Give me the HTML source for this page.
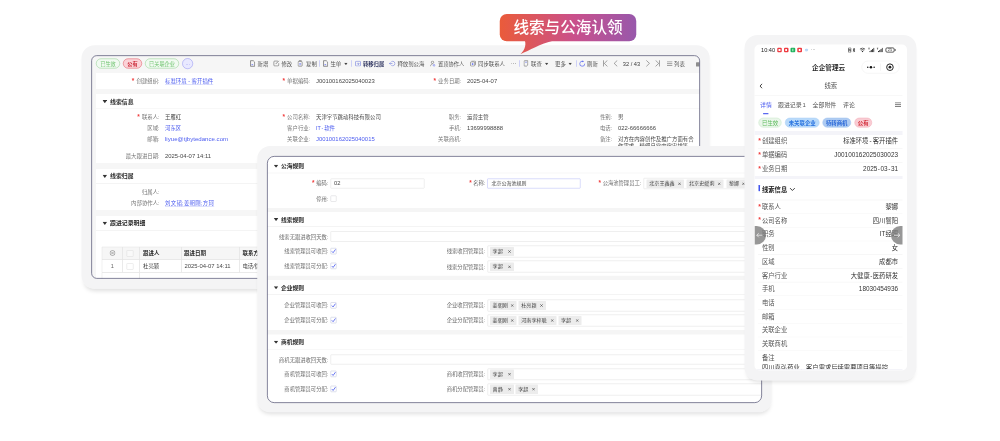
<!DOCTYPE html>
<html lang="zh-CN">
<head>
<meta charset="utf-8">
<title>线索与公海认领</title>
<style>
html,body{margin:0;padding:0;}
body{width:1000px;height:441px;position:relative;overflow:hidden;background:#fff;font-family:"Liberation Sans","Noto Sans CJK SC",sans-serif;}
#root{position:absolute;left:0;top:0;width:4000px;height:1764px;transform:scale(0.25);transform-origin:0 0;}
#wrap{position:absolute;left:0;top:0;width:1000px;height:441px;overflow:hidden;}
#z{position:relative;width:1000px;height:441px;zoom:4;}
.frame{position:absolute;background:#f4f4f5;border-radius:13px;box-shadow:0 4px 4px -2.5px rgba(0,0,0,0.13);}
.screen{position:absolute;overflow:hidden;}
.screen div,.screen span,.screen svg{position:absolute;}
.screen span{white-space:nowrap;mix-blend-mode:darken;}
.screen b{position:static;}
.edge{position:absolute;box-sizing:border-box;border:0.9px solid #5a5a78;pointer-events:none;}
#bubble{position:absolute;left:499.8px;top:14px;width:136.4px;height:27.2px;border-radius:7px;background:linear-gradient(90deg,#ea5b3a 0%,#c9508c 55%,#9858ab 100%);}
#bubble span{position:absolute;left:0;right:0;top:0;height:27.2px;line-height:26.6px;text-align:center;color:#fff;font-size:15.6px;font-weight:500;white-space:nowrap;mix-blend-mode:lighten;}
#tail{position:absolute;left:499.8px;top:14px;width:136.4px;height:42px;}
</style>
</head>
<body>
<div id="wrap"><div id="root"><div id="z">

<!-- left card -->
<div class="frame" style="left:81.5px;top:45.2px;width:628.2px;height:243.6px;"></div>
<div class="screen" style="left:91.2px;top:55.2px;width:608.80px;height:223.50px;background:#f6f6f6;border-radius:5.5px 5.5px 0 5.5px;">
<div style="left:4.80px;top:17.80px;width:604.00px;height:16.00px;background:#fff;"></div>
<div style="left:4.80px;top:38.80px;width:604.00px;height:69.00px;background:#fff;"></div>
<div style="left:4.80px;top:113.80px;width:604.00px;height:41.00px;background:#fff;"></div>
<div style="left:4.80px;top:160.80px;width:604.00px;height:62.70px;background:#fff;"></div>
<div style="left:4.80px;top:52.70px;width:604.00px;height:0.60px;background:#f0f0f0;"></div>
<div style="left:4.80px;top:127.90px;width:604.00px;height:0.60px;background:#f0f0f0;"></div>
<div style="left:4.80px;top:174.90px;width:604.00px;height:0.60px;background:#f0f0f0;"></div>
<div style="left:4.80px;top:3.40px;width:24.00px;height:10.00px;background:#f1faf1;border:0.50px solid #8fd18f;border-radius:5.00px;box-sizing:border-box;"></div>
<span style="left:16.80px;top:5.35px;font-size:5.20px;line-height:7.80px;color:#6cc26c;transform:translateX(-50%);">已生效</span>
<div style="left:31.80px;top:3.40px;width:19.00px;height:10.00px;background:#fbd3d8;border:0.50px solid #e0525f;border-radius:5.00px;box-sizing:border-box;"></div>
<span style="left:41.30px;top:5.35px;font-size:5.20px;line-height:7.80px;color:#c8202f;font-weight:700;transform:translateX(-50%);">公有</span>
<div style="left:53.80px;top:3.40px;width:34.00px;height:10.00px;background:#f1faf1;border:0.50px solid #8fd18f;border-radius:5.00px;box-sizing:border-box;"></div>
<span style="left:70.80px;top:5.35px;font-size:5.20px;line-height:7.80px;color:#6cc26c;transform:translateX(-50%);">已关联企业</span>
<div style="left:91.10px;top:3.05px;width:10.70px;height:10.70px;background:#e9e9ff;border:0.50px solid #8f8ff2;border-radius:5.35px;box-sizing:border-box;"></div>
<span style="left:96.45px;top:6.12px;font-size:4.50px;line-height:6.75px;color:#7b7bea;transform:translateX(-50%);">···</span>
<svg style="left:158.80px;top:4.80px;width:5.20px;height:7.00px;" viewBox="0 0 9.6 12.4"><path d="M1 1h5l2.6 2.6v7.8h-7.6z" fill="none" stroke="#555" stroke-width="1.15"/><path d="M2.8 8.4h3" stroke="#4c5cf0" stroke-width="1.4"/></svg>
<span style="left:166.40px;top:5.13px;font-size:5.40px;line-height:8.10px;color:#555;">新增</span>
<svg style="left:181.80px;top:4.80px;width:6.80px;height:6.80px;" viewBox="0 0 12.8 12.8"><path d="M9 2H3.2a1.6 1.6 0 0 0-1.6 1.6v6a1.6 1.6 0 0 0 1.6 1.6h6a1.6 1.6 0 0 0 1.6-1.6V6" fill="none" stroke="#555" stroke-width="1"/><path d="M5 7.6l6-6" stroke="#555" stroke-width="1.2"/></svg>
<span style="left:190.20px;top:5.13px;font-size:5.40px;line-height:8.10px;color:#555;">修改</span>
<svg style="left:206.40px;top:4.90px;width:5.40px;height:6.80px;" viewBox="0 0 10 12.4"><rect x="1" y="2.6" width="7.6" height="8.8" rx="1.2" fill="none" stroke="#555" stroke-width="1"/><path d="M2.6 1h5" stroke="#555" stroke-width="1"/><path d="M3.2 6.4h3.4M3.2 8.6h3.4" stroke="#4c5cf0" stroke-width="0.9"/></svg>
<span style="left:214.80px;top:5.13px;font-size:5.40px;line-height:8.10px;color:#555;">复制</span>
<div style="left:227.90px;top:5.00px;width:0.60px;height:6.60px;background:#bfc3f6;"></div>
<svg style="left:231.80px;top:4.80px;width:5.20px;height:7.00px;" viewBox="0 0 9.6 12.4"><path d="M1 1h5l2.6 2.6v7.8h-7.6z" fill="none" stroke="#555" stroke-width="1.15"/><path d="M2.8 8.4h3" stroke="#4c5cf0" stroke-width="1.4"/></svg>
<span style="left:239.20px;top:5.13px;font-size:5.40px;line-height:8.10px;color:#555;">生单</span>
<svg style="left:252.70px;top:7.50px;width:3.80px;height:2.40px;" viewBox="0 0 6 4"><path d="M0 0h6L3 4z" fill="#444"/></svg>
<div style="left:259.90px;top:5.00px;width:0.60px;height:6.60px;background:#bfc3f6;"></div>
<svg style="left:263.80px;top:5.40px;width:6.00px;height:6.00px;" viewBox="0 0 12 12"><rect x="1" y="1.6" width="10" height="9.4" rx="1.4" fill="none" stroke="#5a68d8" stroke-width="1"/><path d="M3.6 6.6h4.6M6.4 4.4l2 2.2-2 2.2" fill="none" stroke="#5a68d8" stroke-width="1"/></svg>
<span style="left:271.80px;top:5.24px;font-size:5.30px;line-height:7.95px;color:#2f3560;font-weight:700;">转移归属</span>
<svg style="left:297.80px;top:5.40px;width:6.40px;height:6.00px;" viewBox="0 0 12.8 12"><path d="M4.6 2.4a4.6 4.6 0 1 1 0 7.4" fill="none" stroke="#5a68d8" stroke-width="1"/><path d="M0.6 6h6.4M3 3.8L0.8 6 3 8.2" fill="none" stroke="#5a68d8" stroke-width="1"/></svg>
<span style="left:306.20px;top:5.13px;font-size:5.40px;line-height:8.10px;color:#555;">释放到公海</span>
<svg style="left:338.80px;top:5.20px;width:5.60px;height:6.40px;" viewBox="0 0 11.2 12.8"><circle cx="5" cy="3.6" r="2.4" fill="none" stroke="#555" stroke-width="1"/><path d="M1 11.6c0-3 1.8-4.6 4-4.6" fill="none" stroke="#555" stroke-width="1"/><circle cx="8.2" cy="9.8" r="1.8" fill="none" stroke="#4c5cf0" stroke-width="1"/></svg>
<span style="left:346.80px;top:5.29px;font-size:5.25px;line-height:7.88px;color:#555;">置顶协作人</span>
<svg style="left:378.80px;top:5.30px;width:6.00px;height:6.20px;" viewBox="0 0 12 12.4"><rect x="1" y="2.8" width="8.4" height="8.4" rx="1.4" fill="none" stroke="#555" stroke-width="1"/><path d="M3 1h6.6a1.4 1.4 0 0 1 1.4 1.4v6.4" fill="none" stroke="#555" stroke-width="1"/><circle cx="5.2" cy="7" r="1.7" fill="#4c5cf0"/></svg>
<span style="left:386.80px;top:5.13px;font-size:5.40px;line-height:8.10px;color:#555;">同步联系人</span>
<div style="left:420.00px;top:8.30px;width:5.00px;height:0.60px;background:repeating-linear-gradient(90deg,#777 0 1.2px,transparent 1.2px 1.9px);"></div>
<div style="left:427.90px;top:5.00px;width:0.60px;height:6.60px;background:#bfc3f6;"></div>
<svg style="left:432.40px;top:4.90px;width:5.00px;height:6.80px;" viewBox="0 0 9.6 12.4"><path d="M1 2.4a1.4 1.4 0 0 1 1.4-1.4h5.8v8.4l-2.4 2H2.4A1.4 1.4 0 0 1 1 10z" fill="none" stroke="#555" stroke-width="1"/><path d="M3 4h3.6" stroke="#4c5cf0" stroke-width="1"/></svg>
<span style="left:439.80px;top:5.13px;font-size:5.40px;line-height:8.10px;color:#555;">联查</span>
<svg style="left:453.50px;top:7.50px;width:3.80px;height:2.40px;" viewBox="0 0 6 4"><path d="M0 0h6L3 4z" fill="#444"/></svg>
<span style="left:463.80px;top:5.13px;font-size:5.40px;line-height:8.10px;color:#555;">更多</span>
<svg style="left:477.10px;top:7.50px;width:3.80px;height:2.40px;" viewBox="0 0 6 4"><path d="M0 0h6L3 4z" fill="#444"/></svg>
<div style="left:485.10px;top:5.00px;width:0.60px;height:6.60px;background:#bfc3f6;"></div>
<svg style="left:487.60px;top:5.00px;width:7.00px;height:6.80px;" viewBox="0 0 14 13.6"><path d="M8.6 2.3A5 5 0 1 0 12 6.8" fill="none" stroke="#4c5cf0" stroke-width="1.3"/><path d="M7.4 0.2l3 2.2-3.2 1.8z" fill="#4c5cf0"/></svg>
<span style="left:495.80px;top:5.13px;font-size:5.40px;line-height:8.10px;color:#555;">刷新</span>
<svg style="left:511.80px;top:4.90px;width:5.00px;height:6.80px;" viewBox="0 0 10 13.6"><path d="M1 0.6v12.4M8.8 0.8L2.6 6.8l6.2 6" fill="none" stroke="#5c5c5c" stroke-width="1.1"/></svg>
<svg style="left:522.20px;top:4.90px;width:4.40px;height:6.80px;" viewBox="0 0 8.8 13.6"><path d="M7.6 0.8L1.4 6.8l6.2 6" fill="none" stroke="#5c5c5c" stroke-width="1.1"/></svg>
<span style="left:540.30px;top:4.80px;font-size:5.70px;line-height:8.55px;color:#3a3a3a;transform:translateX(-50%);">32 / 43</span>
<svg style="left:554.60px;top:4.90px;width:4.40px;height:6.80px;" viewBox="0 0 8.8 13.6"><path d="M1.2 0.8l6.2 6-6.2 6" fill="none" stroke="#5c5c5c" stroke-width="1.1"/></svg>
<svg style="left:563.80px;top:4.90px;width:5.00px;height:6.80px;" viewBox="0 0 10 13.6"><path d="M9 0.6v12.4M1.2 0.8l6.2 6-6.2 6" fill="none" stroke="#5c5c5c" stroke-width="1.1"/></svg>
<svg style="left:575.80px;top:6.00px;width:5.60px;height:4.80px;" viewBox="0 0 11.2 9.6"><path d="M0 1h11.2M0 4.8h11.2M0 8.6h11.2" stroke="#555" stroke-width="1.1"/></svg>
<span style="left:582.80px;top:5.13px;font-size:5.40px;line-height:8.10px;color:#555;">列表</span>
<div style="left:604.80px;top:7.00px;width:3.40px;height:4.40px;background:#8e8e8e;border-radius:0.6px;"></div>
<span style="left:68.40px;top:22.13px;font-size:5.40px;line-height:8.10px;color:#777;transform:translateX(-100%);"><b style="color:#f03a3a;font-weight:700;font-size:1.2em;line-height:0;margin-right:2.2px;position:relative;top:0.1px">*</b>创建组织:</span>
<span style="left:73.80px;top:22.13px;font-size:5.40px;line-height:8.10px;color:#4c5cf0;text-decoration:underline;text-decoration-thickness:0.35px;text-underline-offset:1.3px;text-decoration-color:rgba(76,92,240,0.75);">标准环<i style="font-style:normal;letter-spacing:1.6px">境-</i>客开插件</span>
<span style="left:219.00px;top:22.13px;font-size:5.40px;line-height:8.10px;color:#777;transform:translateX(-100%);"><b style="color:#f03a3a;font-weight:700;font-size:1.2em;line-height:0;margin-right:2.2px;position:relative;top:0.1px">*</b>单据编码:</span>
<span style="left:224.80px;top:21.58px;font-size:5.90px;line-height:8.85px;color:#474747;">J00100162025040023</span>
<span style="left:370.00px;top:22.13px;font-size:5.40px;line-height:8.10px;color:#777;transform:translateX(-100%);"><b style="color:#f03a3a;font-weight:700;font-size:1.2em;line-height:0;margin-right:2.2px;position:relative;top:0.1px">*</b>业务日期:</span>
<span style="left:375.80px;top:21.58px;font-size:5.90px;line-height:8.85px;color:#474747;">2025-04-07</span>
<svg style="left:11.20px;top:44.80px;width:4.60px;height:3.20px;" viewBox="0 0 8 4.6" preserveAspectRatio="none"><path d="M0 0h8L4 4.6z" fill="#333"/></svg>
<span style="left:18.80px;top:42.58px;font-size:5.90px;line-height:8.85px;color:#2a2a2a;font-weight:700;">线索信息</span>
<span style="left:68.40px;top:58.13px;font-size:5.40px;line-height:8.10px;color:#777;transform:translateX(-100%);"><b style="color:#f03a3a;font-weight:700;font-size:1.2em;line-height:0;margin-right:2.2px;position:relative;top:0.1px">*</b>联系人:</span>
<span style="left:73.80px;top:58.13px;font-size:5.40px;line-height:8.10px;color:#474747;">王雁红</span>
<span style="left:219.00px;top:58.13px;font-size:5.40px;line-height:8.10px;color:#777;transform:translateX(-100%);"><b style="color:#f03a3a;font-weight:700;font-size:1.2em;line-height:0;margin-right:2.2px;position:relative;top:0.1px">*</b>公司名称:</span>
<span style="left:224.80px;top:58.13px;font-size:5.40px;line-height:8.10px;color:#474747;">天津字节跳动科技有限公司</span>
<span style="left:370.00px;top:58.13px;font-size:5.40px;line-height:8.10px;color:#777;transform:translateX(-100%);">职务:</span>
<span style="left:375.80px;top:58.13px;font-size:5.40px;line-height:8.10px;color:#474747;">运营主管</span>
<span style="left:521.00px;top:58.13px;font-size:5.40px;line-height:8.10px;color:#777;transform:translateX(-100%);">性别:</span>
<span style="left:526.80px;top:58.13px;font-size:5.40px;line-height:8.10px;color:#474747;">男</span>
<span style="left:68.40px;top:69.13px;font-size:5.40px;line-height:8.10px;color:#777;transform:translateX(-100%);">区域:</span>
<span style="left:73.80px;top:69.13px;font-size:5.40px;line-height:8.10px;color:#4c5cf0;">河东区</span>
<span style="left:219.00px;top:69.13px;font-size:5.40px;line-height:8.10px;color:#777;transform:translateX(-100%);">客户行业:</span>
<span style="left:224.80px;top:69.13px;font-size:5.40px;line-height:8.10px;color:#4c5cf0;">IT<i style="font-style:normal;margin:0 0.8px">-</i>软件</span>
<span style="left:370.00px;top:69.13px;font-size:5.40px;line-height:8.10px;color:#777;transform:translateX(-100%);">手机:</span>
<span style="left:375.80px;top:68.58px;font-size:5.90px;line-height:8.85px;color:#474747;">13699998888</span>
<span style="left:521.00px;top:69.13px;font-size:5.40px;line-height:8.10px;color:#777;transform:translateX(-100%);">电话:</span>
<span style="left:526.80px;top:68.58px;font-size:5.90px;line-height:8.85px;color:#474747;">022-66666666</span>
<span style="left:68.40px;top:80.13px;font-size:5.40px;line-height:8.10px;color:#777;transform:translateX(-100%);">邮箱:</span>
<span style="left:73.80px;top:79.36px;font-size:6.10px;line-height:9.15px;color:#4c5cf0;">liyue@tjbytedance.com</span>
<span style="left:219.00px;top:80.13px;font-size:5.40px;line-height:8.10px;color:#777;transform:translateX(-100%);">关联企业:</span>
<span style="left:224.80px;top:79.58px;font-size:5.90px;line-height:8.85px;color:#4c5cf0;">J00100162025040015</span>
<span style="left:370.00px;top:80.13px;font-size:5.40px;line-height:8.10px;color:#777;transform:translateX(-100%);">关联商机:</span>
<span style="left:521.00px;top:80.13px;font-size:5.40px;line-height:8.10px;color:#777;transform:translateX(-100%);">备注:</span>
<span style="left:526.80px;top:80.13px;font-size:5.40px;line-height:8.10px;color:#474747;">对方在内容创作及推广方面有合</span>
<span style="left:526.80px;top:87.13px;font-size:5.40px;line-height:8.10px;color:#474747;">作需求，精细日常内容安排等</span>
<span style="left:68.40px;top:97.13px;font-size:5.40px;line-height:8.10px;color:#777;transform:translateX(-100%);">最大跟进日期:</span>
<span style="left:73.80px;top:96.58px;font-size:5.90px;line-height:8.85px;color:#474747;">2025-04-07 14:11</span>
<svg style="left:11.20px;top:119.60px;width:4.60px;height:3.20px;" viewBox="0 0 8 4.6" preserveAspectRatio="none"><path d="M0 0h8L4 4.6z" fill="#333"/></svg>
<span style="left:18.80px;top:116.58px;font-size:5.90px;line-height:8.85px;color:#2a2a2a;font-weight:700;">线索归属</span>
<span style="left:68.40px;top:133.13px;font-size:5.40px;line-height:8.10px;color:#777;transform:translateX(-100%);">归属人:</span>
<span style="left:68.40px;top:144.13px;font-size:5.40px;line-height:8.10px;color:#777;transform:translateX(-100%);">内部协作人:</span>
<span style="left:73.80px;top:144.13px;font-size:5.40px;line-height:8.10px;color:#4c5cf0;letter-spacing:0.3px;text-decoration:underline;text-decoration-thickness:0.35px;text-underline-offset:1.3px;text-decoration-color:rgba(76,92,240,0.75);">刘文韬;姜朝刚;方珂</span>
<svg style="left:11.20px;top:166.60px;width:4.60px;height:3.20px;" viewBox="0 0 8 4.6" preserveAspectRatio="none"><path d="M0 0h8L4 4.6z" fill="#333"/></svg>
<span style="left:18.80px;top:163.58px;font-size:5.90px;line-height:8.85px;color:#2a2a2a;font-weight:700;">跟进记录明细</span>
<div style="left:10.80px;top:191.80px;width:198.00px;height:12.40px;background:#f6f6f6;"></div>
<div style="left:10.80px;top:191.50px;width:198.00px;height:0.60px;background:#e3e3e3;"></div>
<div style="left:10.80px;top:203.90px;width:198.00px;height:0.60px;background:#e3e3e3;"></div>
<div style="left:10.80px;top:216.90px;width:198.00px;height:0.60px;background:#e3e3e3;"></div>
<div style="left:10.50px;top:191.80px;width:0.60px;height:25.40px;background:#e3e3e3;"></div>
<div style="left:30.90px;top:191.80px;width:0.60px;height:25.40px;background:#e3e3e3;"></div>
<div style="left:47.90px;top:191.80px;width:0.60px;height:25.40px;background:#e3e3e3;"></div>
<div style="left:89.90px;top:191.80px;width:0.60px;height:25.40px;background:#e3e3e3;"></div>
<div style="left:147.90px;top:191.80px;width:0.60px;height:25.40px;background:#e3e3e3;"></div>
<div style="left:10.50px;top:217.20px;width:0.60px;height:6.30px;background:#e3e3e3;"></div>
<div style="left:47.90px;top:217.20px;width:0.60px;height:6.30px;background:#e3e3e3;"></div>
<svg style="left:18.40px;top:194.80px;width:6.00px;height:6.00px;" viewBox="0 0 12 12"><circle cx="6" cy="6" r="5" fill="none" stroke="#666" stroke-width="1"/><path d="M3.6 4.8h4.8M3.6 7.2h4.8" stroke="#666" stroke-width="0.9"/></svg>
<div style="left:35.40px;top:195.00px;width:7.00px;height:6.60px;border:0.5px solid #dcdcdc;border-radius:0.8px;box-sizing:border-box;background:#f9f9f9;"></div>
<span style="left:51.80px;top:194.02px;font-size:5.50px;line-height:8.25px;color:#2a2a2a;font-weight:700;">跟进人</span>
<span style="left:92.80px;top:194.02px;font-size:5.50px;line-height:8.25px;color:#2a2a2a;font-weight:700;">跟进日期</span>
<span style="left:151.20px;top:194.02px;font-size:5.50px;line-height:8.25px;color:#2a2a2a;font-weight:700;">联系方式</span>
<span style="left:21.00px;top:206.91px;font-size:5.60px;line-height:8.40px;color:#666;transform:translateX(-50%);">1</span>
<div style="left:35.40px;top:208.00px;width:7.00px;height:6.60px;border:0.5px solid #dcdcdc;border-radius:0.8px;box-sizing:border-box;background:#fff;"></div>
<span style="left:51.80px;top:207.13px;font-size:5.40px;line-height:8.10px;color:#474747;">杜亮颖</span>
<span style="left:93.20px;top:206.58px;font-size:5.90px;line-height:8.85px;color:#474747;">2025-04-07 14:11</span>
<span style="left:151.20px;top:207.13px;font-size:5.40px;line-height:8.10px;color:#474747;">电话/微信</span>
</div>
<div class="edge" style="left:91.2px;top:55.2px;width:608.80px;height:223.50px;border-radius:5.5px 5.5px 0 5.5px;"></div>

<!-- title bubble -->
<svg id="tail" viewBox="0 0 136.4 42">
<defs><linearGradient id="g1" gradientUnits="userSpaceOnUse" x1="0" y1="0" x2="136.4" y2="0"><stop offset="0" stop-color="#ea5b3a"/><stop offset="0.55" stop-color="#c9508c"/><stop offset="1" stop-color="#9858ab"/></linearGradient></defs>
<path d="M25 26 C27 32 24 37 20.6 40.2 C30 36.5 40 30 54 26.6 Z" fill="url(#g1)"/>
</svg>
<div id="bubble"><span>线索与公海认领</span></div>

<!-- middle card -->
<div class="frame" style="left:257.3px;top:146px;width:514.4px;height:266.2px;"></div>
<div class="screen" style="left:267px;top:156px;width:495.00px;height:247.00px;background:#f5f5f5;border-radius:7.2px;">
<div style="left:0.00px;top:0.00px;width:495.00px;height:52.00px;background:#fff;"></div>
<svg style="left:6.70px;top:8.70px;width:4.60px;height:3.10px;" viewBox="0 0 8 4.6" preserveAspectRatio="none"><path d="M0 0h8L4 4.6z" fill="#333"/></svg>
<span style="left:14.00px;top:5.95px;font-size:5.75px;line-height:8.62px;color:#2a2a2a;font-weight:700;">公海规则</span>
<div style="left:0.00px;top:16.70px;width:495.00px;height:0.60px;background:#f0f0f0;"></div>
<div style="left:0.00px;top:56.00px;width:495.00px;height:63.80px;background:#fff;"></div>
<svg style="left:6.70px;top:61.90px;width:4.60px;height:3.10px;" viewBox="0 0 8 4.6" preserveAspectRatio="none"><path d="M0 0h8L4 4.6z" fill="#333"/></svg>
<span style="left:14.00px;top:59.95px;font-size:5.75px;line-height:8.62px;color:#2a2a2a;font-weight:700;">线索规则</span>
<div style="left:0.00px;top:70.10px;width:495.00px;height:0.60px;background:#f0f0f0;"></div>
<div style="left:0.00px;top:124.00px;width:495.00px;height:50.00px;background:#fff;"></div>
<svg style="left:6.70px;top:130.30px;width:4.60px;height:3.10px;" viewBox="0 0 8 4.6" preserveAspectRatio="none"><path d="M0 0h8L4 4.6z" fill="#333"/></svg>
<span style="left:14.00px;top:127.95px;font-size:5.75px;line-height:8.62px;color:#2a2a2a;font-weight:700;">企业规则</span>
<div style="left:0.00px;top:138.30px;width:495.00px;height:0.60px;background:#f0f0f0;"></div>
<div style="left:0.00px;top:178.40px;width:495.00px;height:68.60px;background:#fff;"></div>
<svg style="left:6.70px;top:184.70px;width:4.60px;height:3.10px;" viewBox="0 0 8 4.6" preserveAspectRatio="none"><path d="M0 0h8L4 4.6z" fill="#333"/></svg>
<span style="left:14.00px;top:181.95px;font-size:5.75px;line-height:8.62px;color:#2a2a2a;font-weight:700;">商机规则</span>
<div style="left:0.00px;top:193.20px;width:495.00px;height:0.60px;background:#f0f0f0;"></div>
<span style="left:61.20px;top:23.44px;font-size:5.30px;line-height:7.95px;color:#6e6e6e;transform:translateX(-100%);"><b style="color:#f03a3a;font-weight:700;font-size:1.2em;line-height:0;margin-right:1.6px;position:relative;top:0.1px">*</b>编码:</span>
<div style="left:63.40px;top:22.40px;width:94.20px;height:10.10px;border:0.6px solid #dedede;border-radius:0.8px;box-sizing:border-box;background:#fff;"></div>
<span style="left:67.00px;top:22.89px;font-size:5.80px;line-height:8.70px;color:#474747;">02</span>
<span style="left:218.30px;top:23.44px;font-size:5.30px;line-height:7.95px;color:#6e6e6e;transform:translateX(-100%);"><b style="color:#f03a3a;font-weight:700;font-size:1.2em;line-height:0;margin-right:1.6px;position:relative;top:0.1px">*</b>名称:</span>
<div style="left:220.20px;top:22.40px;width:93.40px;height:10.10px;border:0.6px solid #b4b8f6;border-radius:0.8px;box-sizing:border-box;background:#fff;"></div>
<span style="left:224.40px;top:23.77px;font-size:5.00px;line-height:7.50px;color:#474747;">北京公海池规则</span>
<span style="left:374.20px;top:23.44px;font-size:5.30px;line-height:7.95px;color:#6e6e6e;transform:translateX(-100%);"><b style="color:#f03a3a;font-weight:700;font-size:1.2em;line-height:0;margin-right:1.6px;position:relative;top:0.1px">*</b>公海池管理员工:</span>
<div style="left:376.60px;top:22.00px;width:122.40px;height:11.00px;border:0.6px solid #dedede;border-radius:0.8px;box-sizing:border-box;background:#fff;"></div>
<div style="left:379.60px;top:23.40px;width:37.40px;height:8.60px;background:#ececec;border-radius:0.6px;"></div>
<span style="left:382.20px;top:23.66px;font-size:5.10px;line-height:7.65px;color:#444;">北京王鑫鑫</span>
<svg style="left:411.10px;top:26.20px;width:3.00px;height:3.00px;" viewBox="0 0 6 6"><path d="M0.5 0.5l5 5M5.5 0.5l-5 5" stroke="#333" stroke-width="1.1"/></svg>
<div style="left:419.40px;top:23.40px;width:37.20px;height:8.60px;background:#ececec;border-radius:0.6px;"></div>
<span style="left:422.00px;top:23.66px;font-size:5.10px;line-height:7.65px;color:#444;">北京史媛莉</span>
<svg style="left:450.70px;top:26.20px;width:3.00px;height:3.00px;" viewBox="0 0 6 6"><path d="M0.5 0.5l5 5M5.5 0.5l-5 5" stroke="#333" stroke-width="1.1"/></svg>
<div style="left:459.40px;top:23.40px;width:21.60px;height:8.60px;background:#ececec;border-radius:0.6px;"></div>
<span style="left:462.00px;top:23.66px;font-size:5.10px;line-height:7.65px;color:#444;">黎娜</span>
<svg style="left:475.10px;top:26.20px;width:3.00px;height:3.00px;" viewBox="0 0 6 6"><path d="M0.5 0.5l5 5M5.5 0.5l-5 5" stroke="#333" stroke-width="1.1"/></svg>
<span style="left:61.20px;top:39.44px;font-size:5.30px;line-height:7.95px;color:#6e6e6e;transform:translateX(-100%);">停用:</span>
<div style="left:63.40px;top:39.50px;width:6.20px;height:6.20px;border:0.6px solid #d2d2d6;border-radius:0.8px;box-sizing:border-box;background:#fff;"></div>
<span style="left:61.20px;top:77.44px;font-size:5.30px;line-height:7.95px;color:#6e6e6e;transform:translateX(-100%);">线索无跟进收回天数:</span>
<div style="left:63.40px;top:75.20px;width:435.60px;height:10.60px;border:0.6px solid #dedede;border-radius:0.8px;box-sizing:border-box;background:#fff;"></div>
<span style="left:61.20px;top:91.44px;font-size:5.30px;line-height:7.95px;color:#6e6e6e;transform:translateX(-100%);">线索管理员可收回:</span>
<div style="left:63.40px;top:92.10px;width:6.20px;height:6.20px;border:0.6px solid #bcc0d8;border-radius:0.8px;box-sizing:border-box;background:#fff;"></div>
<svg style="left:64.00px;top:92.60px;width:5.20px;height:5.20px;" viewBox="0 0 10.4 10.4"><path d="M1.6 5.6l2.6 2.8 4.8-6.6" fill="none" stroke="#4456ee" stroke-width="1.6"/></svg>
<span style="left:218.30px;top:91.44px;font-size:5.30px;line-height:7.95px;color:#6e6e6e;transform:translateX(-100%);">线索收回管理员:</span>
<div style="left:220.40px;top:89.40px;width:278.60px;height:12.00px;border:0.6px solid #dedede;border-radius:0.8px;box-sizing:border-box;background:#fff;"></div>
<div style="left:223.00px;top:91.00px;width:24.00px;height:9.00px;background:#ececec;border-radius:0.6px;"></div>
<span style="left:225.60px;top:91.66px;font-size:5.10px;line-height:7.65px;color:#444;">李超</span>
<svg style="left:241.10px;top:94.00px;width:3.00px;height:3.00px;" viewBox="0 0 6 6"><path d="M0.5 0.5l5 5M5.5 0.5l-5 5" stroke="#333" stroke-width="1.1"/></svg>
<span style="left:61.20px;top:106.44px;font-size:5.30px;line-height:7.95px;color:#6e6e6e;transform:translateX(-100%);">线索管理员可分配:</span>
<div style="left:63.40px;top:106.70px;width:6.20px;height:6.20px;border:0.6px solid #bcc0d8;border-radius:0.8px;box-sizing:border-box;background:#fff;"></div>
<svg style="left:64.00px;top:107.20px;width:5.20px;height:5.20px;" viewBox="0 0 10.4 10.4"><path d="M1.6 5.6l2.6 2.8 4.8-6.6" fill="none" stroke="#4456ee" stroke-width="1.6"/></svg>
<span style="left:218.30px;top:107.44px;font-size:5.30px;line-height:7.95px;color:#6e6e6e;transform:translateX(-100%);">线索分配管理员:</span>
<div style="left:220.40px;top:104.60px;width:278.60px;height:12.00px;border:0.6px solid #dedede;border-radius:0.8px;box-sizing:border-box;background:#fff;"></div>
<div style="left:223.00px;top:106.40px;width:24.00px;height:8.60px;background:#ececec;border-radius:0.6px;"></div>
<span style="left:225.60px;top:106.66px;font-size:5.10px;line-height:7.65px;color:#444;">李超</span>
<svg style="left:241.10px;top:109.20px;width:3.00px;height:3.00px;" viewBox="0 0 6 6"><path d="M0.5 0.5l5 5M5.5 0.5l-5 5" stroke="#333" stroke-width="1.1"/></svg>
<span style="left:61.20px;top:145.44px;font-size:5.30px;line-height:7.95px;color:#6e6e6e;transform:translateX(-100%);">企业管理员可收回:</span>
<div style="left:63.40px;top:146.30px;width:6.20px;height:6.20px;border:0.6px solid #bcc0d8;border-radius:0.8px;box-sizing:border-box;background:#fff;"></div>
<svg style="left:64.00px;top:146.80px;width:5.20px;height:5.20px;" viewBox="0 0 10.4 10.4"><path d="M1.6 5.6l2.6 2.8 4.8-6.6" fill="none" stroke="#4456ee" stroke-width="1.6"/></svg>
<span style="left:218.30px;top:145.44px;font-size:5.30px;line-height:7.95px;color:#6e6e6e;transform:translateX(-100%);">企业收回管理员:</span>
<div style="left:220.40px;top:143.40px;width:278.60px;height:12.20px;border:0.6px solid #dedede;border-radius:0.8px;box-sizing:border-box;background:#fff;"></div>
<div style="left:223.00px;top:145.00px;width:26.60px;height:9.00px;background:#ececec;border-radius:0.6px;"></div>
<span style="left:225.60px;top:145.66px;font-size:5.10px;line-height:7.65px;color:#444;">姜朝刚</span>
<svg style="left:243.70px;top:148.00px;width:3.00px;height:3.00px;" viewBox="0 0 6 6"><path d="M0.5 0.5l5 5M5.5 0.5l-5 5" stroke="#333" stroke-width="1.1"/></svg>
<div style="left:251.60px;top:145.00px;width:27.40px;height:9.00px;background:#ececec;border-radius:0.6px;"></div>
<span style="left:254.20px;top:145.66px;font-size:5.10px;line-height:7.65px;color:#444;">杜亮颖</span>
<svg style="left:273.10px;top:148.00px;width:3.00px;height:3.00px;" viewBox="0 0 6 6"><path d="M0.5 0.5l5 5M5.5 0.5l-5 5" stroke="#333" stroke-width="1.1"/></svg>
<span style="left:61.20px;top:160.44px;font-size:5.30px;line-height:7.95px;color:#6e6e6e;transform:translateX(-100%);">企业管理员可分配:</span>
<div style="left:63.40px;top:161.10px;width:6.20px;height:6.20px;border:0.6px solid #bcc0d8;border-radius:0.8px;box-sizing:border-box;background:#fff;"></div>
<svg style="left:64.00px;top:161.60px;width:5.20px;height:5.20px;" viewBox="0 0 10.4 10.4"><path d="M1.6 5.6l2.6 2.8 4.8-6.6" fill="none" stroke="#4456ee" stroke-width="1.6"/></svg>
<span style="left:218.30px;top:160.44px;font-size:5.30px;line-height:7.95px;color:#6e6e6e;transform:translateX(-100%);">企业分配管理员:</span>
<div style="left:220.40px;top:158.40px;width:278.60px;height:12.00px;border:0.6px solid #dedede;border-radius:0.8px;box-sizing:border-box;background:#fff;"></div>
<div style="left:223.00px;top:160.00px;width:26.60px;height:9.00px;background:#ececec;border-radius:0.6px;"></div>
<span style="left:225.60px;top:160.66px;font-size:5.10px;line-height:7.65px;color:#444;">姜朝刚</span>
<svg style="left:243.70px;top:163.00px;width:3.00px;height:3.00px;" viewBox="0 0 6 6"><path d="M0.5 0.5l5 5M5.5 0.5l-5 5" stroke="#333" stroke-width="1.1"/></svg>
<div style="left:251.60px;top:160.00px;width:38.00px;height:9.00px;background:#ececec;border-radius:0.6px;"></div>
<span style="left:254.20px;top:160.66px;font-size:5.10px;line-height:7.65px;color:#444;">河南李梓聪</span>
<svg style="left:283.70px;top:163.00px;width:3.00px;height:3.00px;" viewBox="0 0 6 6"><path d="M0.5 0.5l5 5M5.5 0.5l-5 5" stroke="#333" stroke-width="1.1"/></svg>
<div style="left:291.40px;top:160.00px;width:23.20px;height:9.00px;background:#ececec;border-radius:0.6px;"></div>
<span style="left:294.00px;top:160.66px;font-size:5.10px;line-height:7.65px;color:#444;">李超</span>
<svg style="left:308.70px;top:163.00px;width:3.00px;height:3.00px;" viewBox="0 0 6 6"><path d="M0.5 0.5l5 5M5.5 0.5l-5 5" stroke="#333" stroke-width="1.1"/></svg>
<span style="left:61.20px;top:200.44px;font-size:5.30px;line-height:7.95px;color:#6e6e6e;transform:translateX(-100%);">商机无跟进收回天数:</span>
<div style="left:63.40px;top:198.40px;width:435.60px;height:10.20px;border:0.6px solid #dedede;border-radius:0.8px;box-sizing:border-box;background:#fff;"></div>
<span style="left:61.20px;top:214.44px;font-size:5.30px;line-height:7.95px;color:#6e6e6e;transform:translateX(-100%);">商机管理员可收回:</span>
<div style="left:63.40px;top:214.70px;width:6.20px;height:6.20px;border:0.6px solid #bcc0d8;border-radius:0.8px;box-sizing:border-box;background:#fff;"></div>
<svg style="left:64.00px;top:215.20px;width:5.20px;height:5.20px;" viewBox="0 0 10.4 10.4"><path d="M1.6 5.6l2.6 2.8 4.8-6.6" fill="none" stroke="#4456ee" stroke-width="1.6"/></svg>
<span style="left:218.30px;top:214.44px;font-size:5.30px;line-height:7.95px;color:#6e6e6e;transform:translateX(-100%);">商机收回管理员:</span>
<div style="left:220.40px;top:212.40px;width:278.60px;height:11.60px;border:0.6px solid #dedede;border-radius:0.8px;box-sizing:border-box;background:#fff;"></div>
<div style="left:223.00px;top:213.60px;width:24.00px;height:9.40px;background:#ececec;border-radius:0.6px;"></div>
<span style="left:225.60px;top:214.66px;font-size:5.10px;line-height:7.65px;color:#444;">李超</span>
<svg style="left:241.10px;top:216.80px;width:3.00px;height:3.00px;" viewBox="0 0 6 6"><path d="M0.5 0.5l5 5M5.5 0.5l-5 5" stroke="#333" stroke-width="1.1"/></svg>
<span style="left:61.20px;top:229.44px;font-size:5.30px;line-height:7.95px;color:#6e6e6e;transform:translateX(-100%);">商机管理员可分配:</span>
<div style="left:63.40px;top:229.70px;width:6.20px;height:6.20px;border:0.6px solid #bcc0d8;border-radius:0.8px;box-sizing:border-box;background:#fff;"></div>
<svg style="left:64.00px;top:230.20px;width:5.20px;height:5.20px;" viewBox="0 0 10.4 10.4"><path d="M1.6 5.6l2.6 2.8 4.8-6.6" fill="none" stroke="#4456ee" stroke-width="1.6"/></svg>
<span style="left:218.30px;top:229.44px;font-size:5.30px;line-height:7.95px;color:#6e6e6e;transform:translateX(-100%);">商机分配管理员:</span>
<div style="left:220.40px;top:227.40px;width:278.60px;height:12.00px;border:0.6px solid #dedede;border-radius:0.8px;box-sizing:border-box;background:#fff;"></div>
<div style="left:223.00px;top:228.40px;width:24.00px;height:9.60px;background:#ececec;border-radius:0.6px;"></div>
<span style="left:225.60px;top:229.66px;font-size:5.10px;line-height:7.65px;color:#444;">曾静</span>
<svg style="left:241.10px;top:231.70px;width:3.00px;height:3.00px;" viewBox="0 0 6 6"><path d="M0.5 0.5l5 5M5.5 0.5l-5 5" stroke="#333" stroke-width="1.1"/></svg>
<div style="left:248.60px;top:228.40px;width:22.40px;height:9.60px;background:#ececec;border-radius:0.6px;"></div>
<span style="left:251.20px;top:229.66px;font-size:5.10px;line-height:7.65px;color:#444;">李超</span>
<svg style="left:265.10px;top:231.70px;width:3.00px;height:3.00px;" viewBox="0 0 6 6"><path d="M0.5 0.5l5 5M5.5 0.5l-5 5" stroke="#333" stroke-width="1.1"/></svg>
</div>
<div class="edge" style="left:267px;top:156px;width:495.00px;height:247.00px;border-radius:7.2px;"></div>

<!-- phone card -->
<div class="frame" style="left:744.4px;top:35px;width:172.2px;height:345.6px;"></div>
<div class="screen" style="left:754.4px;top:44.4px;width:152.60px;height:326.00px;background:#fff;border-radius:5px;">
<span style="left:6.60px;top:1.65px;font-size:5.65px;line-height:8.48px;color:#222;">10:40</span>
<div style="left:22.80px;top:3.30px;width:4.60px;height:4.60px;background:#ee3a40;border-radius:1px;"></div>
<div style="left:24.20px;top:4.60px;width:1.80px;height:2.00px;background:#fff;border-radius:0.3px;"></div>
<div style="left:29.50px;top:3.30px;width:4.60px;height:4.60px;background:#ee3a40;border-radius:1px;"></div>
<div style="left:30.90px;top:4.60px;width:1.80px;height:2.00px;background:#fff;border-radius:0.3px;"></div>
<div style="left:36.20px;top:3.30px;width:4.60px;height:4.60px;background:#1fb35c;border-radius:1px;"></div>
<div style="left:38.10px;top:4.40px;width:0.80px;height:2.40px;background:#fff;"></div>
<div style="left:42.90px;top:3.30px;width:4.60px;height:4.60px;background:#ee3a40;border-radius:1px;"></div>
<div style="left:44.30px;top:4.60px;width:1.80px;height:2.00px;background:#fff;border-radius:0.3px;"></div>
<svg style="left:50.00px;top:3.80px;width:4.00px;height:3.60px;" viewBox="0 0 8 7.2"><path d="M1 2.4h5.4l-1.6-1.6M7 4.8H1.6l1.6 1.6" fill="none" stroke="#6aa6ea" stroke-width="1"/></svg>
<span style="left:56.60px;top:1.66px;font-size:4.60px;line-height:6.90px;color:#555;">···</span>
<svg style="left:93.60px;top:3.00px;width:3.40px;height:5.20px;" viewBox="0 0 6.8 10.4"><rect x="0.6" y="0.6" width="5.6" height="9.2" rx="1" fill="none" stroke="#2e2e2e" stroke-width="1.3"/><path d="M2 7.6V2.8l2.8 4.8V2.8" fill="none" stroke="#2e2e2e" stroke-width="1.1"/></svg>
<svg style="left:98.20px;top:3.00px;width:2.80px;height:5.20px;" viewBox="0 0 5.6 10.4"><path d="M0.8 3l4 4.2-2 2V1.2l2 2-4 4.2" fill="none" stroke="#2e2e2e" stroke-width="1.25"/></svg>
<svg style="left:105.20px;top:3.20px;width:6.00px;height:4.80px;" viewBox="0 0 12 9.6"><path d="M0.8 3.4a7.4 7.4 0 0 1 10.4 0M2.8 5.6a4.6 4.6 0 0 1 6.4 0" fill="none" stroke="#2e2e2e" stroke-width="1.6"/><circle cx="6" cy="8" r="1.4" fill="#2e2e2e"/></svg>
<svg style="left:113.60px;top:3.20px;width:6.40px;height:4.80px;" viewBox="0 0 12.8 9.6"><path d="M4 9.4V7M6.6 9.4V5M9.2 9.4V3M11.8 9.4V0.6" stroke="#2e2e2e" stroke-width="2"/><path d="M0.4 0.8h3.2M2 0.8v3.4" stroke="#2e2e2e" stroke-width="1.1"/></svg>
<svg style="left:122.00px;top:3.20px;width:6.40px;height:4.80px;" viewBox="0 0 12.8 9.6"><path d="M4 9.4V7M6.6 9.4V5M9.2 9.4V3M11.8 9.4V0.6" stroke="#2e2e2e" stroke-width="2"/><path d="M0.4 0.8h3.2M2 0.8v3.4" stroke="#2e2e2e" stroke-width="1.1"/></svg>
<div style="left:131.00px;top:3.10px;width:9.00px;height:5.00px;border:0.75px solid #2e2e2e;border-radius:1.5px;box-sizing:border-box;"></div>
<span style="left:135.50px;top:2.74px;font-size:3.80px;line-height:5.70px;color:#2e2e2e;transform:translateX(-50%);">25</span>
<div style="left:140.30px;top:4.70px;width:0.90px;height:1.80px;background:#2e2e2e;border-radius:0.4px;"></div>
<span style="left:74.20px;top:18.61px;font-size:6.60px;line-height:9.90px;color:#2a2a2a;font-weight:700;transform:translateX(-50%);">企企管理云</span>
<div style="left:107.00px;top:16.40px;width:38.00px;height:12.80px;border:0.6px solid #ececec;border-radius:6.4px;box-sizing:border-box;background:#fff;"></div>
<svg style="left:112.40px;top:21.00px;width:8.40px;height:3.60px;" viewBox="0 0 16.8 7.2"><circle cx="2" cy="3.6" r="1.5" fill="#111"/><circle cx="8.4" cy="3.6" r="2.5" fill="#111"/><circle cx="14.8" cy="3.6" r="1.5" fill="#111"/></svg>
<div style="left:125.95px;top:19.20px;width:0.50px;height:7.20px;background:#e8e8e8;"></div>
<svg style="left:131.40px;top:18.60px;width:8.40px;height:8.40px;" viewBox="0 0 16.8 16.8"><circle cx="8.4" cy="8.4" r="6.6" fill="none" stroke="#222" stroke-width="2"/><circle cx="8.4" cy="8.4" r="2.8" fill="#222"/></svg>
<svg style="left:4.80px;top:38.80px;width:3.60px;height:5.60px;" viewBox="0 0 7.2 11.2"><path d="M5.8 1L1.6 5.6l4.2 4.6" fill="none" stroke="#222" stroke-width="1.7"/></svg>
<span style="left:76.40px;top:36.83px;font-size:6.40px;line-height:9.60px;color:#555;transform:translateX(-50%);">线索</span>
<div style="left:0.00px;top:50.60px;width:148.20px;height:0.60px;background:#f0f0f0;"></div>
<span style="left:5.60px;top:56.38px;font-size:5.90px;line-height:8.85px;color:#4c5cf0;">详情</span>
<span style="left:23.60px;top:56.38px;font-size:5.90px;line-height:8.85px;color:#555;">跟进记录<i style="font-style:normal;margin-left:0.9px">1</i></span>
<span style="left:58.20px;top:56.38px;font-size:5.90px;line-height:8.85px;color:#555;">全部附件</span>
<span style="left:88.60px;top:56.38px;font-size:5.90px;line-height:8.85px;color:#555;">评论</span>
<svg style="left:140.60px;top:57.80px;width:6.00px;height:4.80px;" viewBox="0 0 12 9.6"><path d="M0 1h12M0 4.8h12M0 8.6h12" stroke="#333" stroke-width="1.3"/></svg>
<div style="left:8.60px;top:68.70px;width:5.60px;height:1.10px;background:#5a6af0;border-radius:0.5px;"></div>
<div style="left:4.20px;top:73.40px;width:23.00px;height:9.80px;background:#eaf6ea;border:0.50px solid #c4e6c4;border-radius:4.90px;box-sizing:border-box;"></div>
<span style="left:15.70px;top:74.93px;font-size:5.40px;line-height:8.10px;color:#5dbb5d;transform:translateX(-50%);">已生效</span>
<div style="left:30.60px;top:73.40px;width:34.40px;height:9.80px;background:#b9dafa;border:0.50px solid #a9cff6;border-radius:4.90px;box-sizing:border-box;"></div>
<span style="left:47.80px;top:74.93px;font-size:5.40px;line-height:8.10px;color:#2a74e0;font-weight:700;transform:translateX(-50%);">未关联企业</span>
<div style="left:68.00px;top:73.40px;width:28.60px;height:9.80px;background:#aecbf2;border:0.50px solid #9fc0ee;border-radius:4.90px;box-sizing:border-box;"></div>
<span style="left:82.30px;top:74.93px;font-size:5.40px;line-height:8.10px;color:#2a68d8;font-weight:700;transform:translateX(-50%);">待转商机</span>
<div style="left:100.00px;top:73.40px;width:17.60px;height:9.80px;background:#f9ccd3;border:0.50px solid #f0a9b4;border-radius:4.90px;box-sizing:border-box;"></div>
<span style="left:108.80px;top:74.93px;font-size:5.40px;line-height:8.10px;color:#d0222f;font-weight:700;transform:translateX(-50%);">公有</span>
<div style="left:0.00px;top:86.60px;width:148.20px;height:4.00px;background:#f4f4f9;"></div>
<span style="left:3.80px;top:91.16px;font-size:6.80px;line-height:10.20px;color:#f03a3a;font-weight:700;">*</span>
<span style="left:7.60px;top:91.94px;font-size:6.30px;line-height:9.45px;color:#555;">创建组织</span>
<span style="left:143.60px;top:91.94px;font-size:6.30px;line-height:9.45px;color:#333;transform:translateX(-100%);">标准环境<i style="font-style:normal;margin:0 1.2px">-</i>客开插件</span>
<div style="left:3.60px;top:103.70px;width:144.60px;height:0.60px;background:#f5f5f5;"></div>
<span style="left:3.80px;top:105.16px;font-size:6.80px;line-height:10.20px;color:#f03a3a;font-weight:700;">*</span>
<span style="left:7.60px;top:105.94px;font-size:6.30px;line-height:9.45px;color:#555;">单据编码</span>
<span style="left:143.60px;top:105.83px;font-size:6.40px;line-height:9.60px;color:#333;transform:translateX(-100%);">J00100162025030023</span>
<div style="left:3.60px;top:117.70px;width:144.60px;height:0.60px;background:#f5f5f5;"></div>
<span style="left:3.80px;top:119.16px;font-size:6.80px;line-height:10.20px;color:#f03a3a;font-weight:700;">*</span>
<span style="left:7.60px;top:119.94px;font-size:6.30px;line-height:9.45px;color:#555;">业务日期</span>
<span style="left:143.60px;top:119.83px;font-size:6.40px;line-height:9.60px;color:#333;transform:translateX(-100%);">2025<i style="font-style:normal;margin:0 0.55px">-</i>03<i style="font-style:normal;margin:0 0.55px">-</i>31</span>
<div style="left:0.00px;top:131.60px;width:148.20px;height:3.00px;background:#f4f4f9;"></div>
<div style="left:4.20px;top:140.60px;width:1.30px;height:6.20px;background:#3f52ee;border-radius:0.4px;"></div>
<span style="left:7.60px;top:140.94px;font-size:6.30px;line-height:9.45px;color:#222;font-weight:700;">线索信息</span>
<svg style="left:35.20px;top:143.20px;width:5.80px;height:3.80px;" viewBox="0 0 11.6 7.6"><path d="M1 1.2l4.8 4.8 4.8-4.8" fill="none" stroke="#222" stroke-width="1.7"/></svg>
<div style="left:0.00px;top:155.30px;width:148.20px;height:0.60px;background:#f0f0f0;"></div>
<span style="left:3.80px;top:156.76px;font-size:6.80px;line-height:10.20px;color:#f03a3a;font-weight:700;">*</span>
<span style="left:7.60px;top:157.94px;font-size:6.30px;line-height:9.45px;color:#555;">联系人</span>
<span style="left:143.60px;top:157.94px;font-size:6.30px;line-height:9.45px;color:#333;transform:translateX(-100%);">黎娜</span>
<div style="left:3.60px;top:168.80px;width:144.60px;height:0.60px;background:#f5f5f5;"></div>
<span style="left:3.80px;top:170.48px;font-size:6.80px;line-height:10.20px;color:#f03a3a;font-weight:700;">*</span>
<span style="left:7.60px;top:171.94px;font-size:6.30px;line-height:9.45px;color:#555;">公司名称</span>
<span style="left:143.60px;top:171.94px;font-size:6.30px;line-height:9.45px;color:#333;transform:translateX(-100%);">四川鬙阳</span>
<div style="left:3.60px;top:182.52px;width:144.60px;height:0.60px;background:#f5f5f5;"></div>
<span style="left:7.60px;top:184.94px;font-size:6.30px;line-height:9.45px;color:#555;">职务</span>
<span style="left:143.60px;top:184.94px;font-size:6.30px;line-height:9.45px;color:#333;transform:translateX(-100%);">IT经理</span>
<div style="left:3.60px;top:196.24px;width:144.60px;height:0.60px;background:#f5f5f5;"></div>
<span style="left:7.60px;top:198.94px;font-size:6.30px;line-height:9.45px;color:#555;">性别</span>
<span style="left:143.60px;top:198.94px;font-size:6.30px;line-height:9.45px;color:#333;transform:translateX(-100%);">女</span>
<div style="left:3.60px;top:209.96px;width:144.60px;height:0.60px;background:#f5f5f5;"></div>
<span style="left:7.60px;top:212.94px;font-size:6.30px;line-height:9.45px;color:#555;">区域</span>
<span style="left:143.60px;top:212.94px;font-size:6.30px;line-height:9.45px;color:#333;transform:translateX(-100%);">成都市</span>
<div style="left:3.60px;top:223.68px;width:144.60px;height:0.60px;background:#f5f5f5;"></div>
<span style="left:7.60px;top:226.94px;font-size:6.30px;line-height:9.45px;color:#555;">客户行业</span>
<span style="left:143.60px;top:226.94px;font-size:6.30px;line-height:9.45px;color:#333;transform:translateX(-100%);">大健康<i style="font-style:normal;margin:0 0.5px">-</i>医药研发</span>
<div style="left:3.60px;top:237.40px;width:144.60px;height:0.60px;background:#f5f5f5;"></div>
<span style="left:7.60px;top:239.94px;font-size:6.30px;line-height:9.45px;color:#555;">手机</span>
<span style="left:143.60px;top:239.83px;font-size:6.40px;line-height:9.60px;color:#333;transform:translateX(-100%);">18030454936</span>
<div style="left:3.60px;top:251.12px;width:144.60px;height:0.60px;background:#f5f5f5;"></div>
<span style="left:7.60px;top:253.94px;font-size:6.30px;line-height:9.45px;color:#555;">电话</span>
<div style="left:3.60px;top:264.84px;width:144.60px;height:0.60px;background:#f5f5f5;"></div>
<span style="left:7.60px;top:267.94px;font-size:6.30px;line-height:9.45px;color:#555;">邮箱</span>
<div style="left:3.60px;top:278.56px;width:144.60px;height:0.60px;background:#f5f5f5;"></div>
<span style="left:7.60px;top:280.94px;font-size:6.30px;line-height:9.45px;color:#555;">关联企业</span>
<div style="left:3.60px;top:292.28px;width:144.60px;height:0.60px;background:#f5f5f5;"></div>
<span style="left:7.60px;top:294.94px;font-size:6.30px;line-height:9.45px;color:#555;">关联商机</span>
<div style="left:3.60px;top:306.00px;width:144.60px;height:0.60px;background:#f5f5f5;"></div>
<span style="left:7.60px;top:308.94px;font-size:6.30px;line-height:9.45px;color:#555;">备注</span>
<div style="left:0.00px;top:315.60px;width:148.20px;height:9.20px;overflow:hidden;"><span style="left:7.60px;top:3.52px;font-size:6.30px;line-height:9.45px;color:#333;">四川喜弘药业，客户需求后续需要项目等操控</span></div>
<div style="left:0.00px;top:324.80px;width:148.20px;height:1.20px;background:#f1f1f7;"></div>
<div style="left:0.00px;top:181.60px;width:11.60px;height:18.60px;background:rgba(125,125,125,0.8);border-radius:0 9.3px 9.3px 0;"></div>
<svg style="left:1.60px;top:188.20px;width:7.00px;height:5.40px;" viewBox="0 0 14 10.8"><path d="M13 5.4H1.6M5.6 1.2L1.4 5.4l4.2 4.2" fill="none" stroke="#fff" stroke-width="1.3"/></svg>
<div style="left:136.60px;top:181.60px;width:11.60px;height:18.60px;background:rgba(125,125,125,0.8);border-radius:9.3px 0 0 9.3px;"></div>
<svg style="left:139.20px;top:188.20px;width:7.00px;height:5.40px;" viewBox="0 0 14 10.8"><path d="M1 5.4h11.4M8.4 1.2l4.2 4.2-4.2 4.2" fill="none" stroke="#fff" stroke-width="1.3"/></svg>
</div>

</div></div></div>
</body>
</html>
